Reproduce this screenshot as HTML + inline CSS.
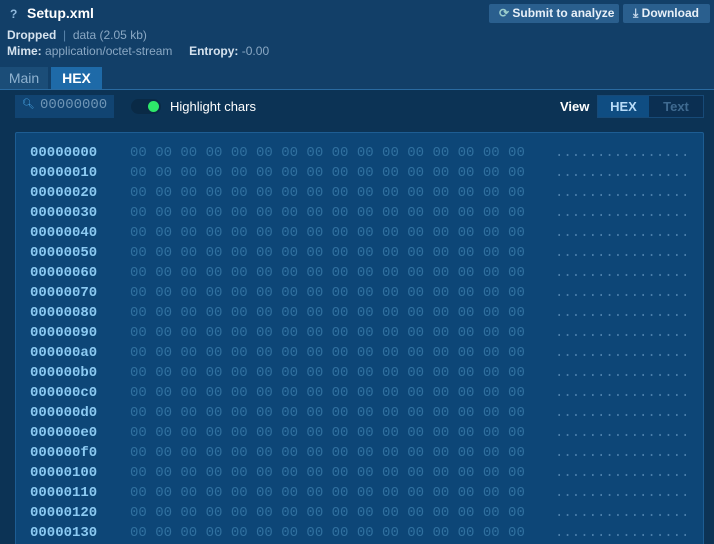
<!DOCTYPE html><html><head><style>
html,body{margin:0;width:714px;height:544px;overflow:hidden}
body{background:#0c3355;font-family:"Liberation Sans",sans-serif;position:relative}
.hdr{position:absolute;left:0;top:0;width:714px;height:89px;background:#123f68;border-bottom:1px solid #2a6aa0}
.t{position:absolute;white-space:nowrap}
.btn{position:absolute;top:4px;height:19px;background:#2a5f8e;border-radius:2px;color:#e8f0f8;font-weight:bold;font-size:12px;line-height:19px}
.panel{position:absolute;left:15px;top:132px;width:687px;height:430px;background:#0d4677;border:1px solid #1d5d93;border-radius:2px}
.m{font-family:"Liberation Mono",monospace;font-size:14px;position:absolute;white-space:pre}
.wrap{position:absolute;left:0;top:0;width:714px;height:544px;overflow:hidden}
</style></head><body><div class="wrap">
<div class="hdr"></div>
<div class="t" style="left:10px;top:7px;color:#8fb8dc;font-size:12px;font-weight:bold">?</div>
<div class="t" style="left:27px;top:5px;color:#fff;font-size:14px;font-weight:bold">Setup.xml</div>
<div class="t" style="left:7px;top:28px;font-size:12px;color:#d5e2ee;font-weight:bold">Dropped <span style="color:#5a86ad;font-weight:normal">&nbsp;|&nbsp;</span> <span style="color:#8aa8c4;font-weight:normal">data (2.05 kb)</span></div>
<div class="t" style="left:7px;top:44px;font-size:12px;color:#d5e2ee;font-weight:bold">Mime: <span style="color:#8aa8c4;font-weight:normal">application/octet-stream</span>&nbsp;&nbsp;&nbsp;&nbsp; Entropy: <span style="color:#8aa8c4;font-weight:normal">-0.00</span></div>
<div class="btn" style="left:489px;width:130px"><span style="padding-left:10px;color:#9cc">⟳</span> Submit to analyze</div>
<div class="btn" style="left:623px;width:87px"><span style="padding-left:10px;color:#cde">⤓</span> Download</div>
<div class="t" style="left:0;top:67px;width:48px;height:22px;background:#1b4d78;color:#8fb2d0;font-size:14px;line-height:22px;text-align:center">Main</div>
<div class="t" style="left:51px;top:67px;width:51px;height:22px;background:#1e6aa8;color:#fff;font-weight:bold;font-size:14px;line-height:22px;text-align:center">HEX</div>
<div class="t" style="left:15px;top:95px;width:99px;height:23px;background:#114472"></div>
<div class="t" style="left:22px;top:99px;color:#4aa8e8;font-size:10px">🔍︎</div>
<div class="m" style="left:40px;top:97px;color:#6f95b5">00000000</div>
<div class="t" style="left:131px;top:99px;width:30px;height:15px;border-radius:8px;background:#0a2a46"></div>
<div class="t" style="left:148px;top:101px;width:11px;height:11px;border-radius:6px;background:#2ee86a"></div>
<div class="t" style="left:170px;top:99px;color:#fff;font-size:13px">Highlight chars</div>
<div class="t" style="left:560px;top:99px;color:#fff;font-size:13px;font-weight:bold">View</div>
<div class="t" style="left:597px;top:95px;width:105px;height:21px;border:1px solid #174a78;background:#0b2f52"></div>
<div class="t" style="left:598px;top:96px;width:51px;height:21px;background:#0f4d82;color:#b8dcf8;font-weight:bold;font-size:13px;line-height:21px;text-align:center">HEX</div>
<div class="t" style="left:650px;top:96px;width:52px;height:21px;color:#3f6a90;font-weight:bold;font-size:13px;line-height:21px;text-align:center">Text</div>
<div class="panel"></div>
<div id="rows"></div>
</div>
<script>
var h='';var b='00 00 00 00 00 00 00 00 00 00 00 00 00 00 00 00';
for(var i=0;i<20;i++){var y=145+i*20;var o=(i*16).toString(16);while(o.length<8)o='0'+o;
h+='<div class="m" style="left:30px;top:'+y+'px;color:#8ccaf2;font-weight:bold">'+o+'</div>';
h+='<div class="m" style="left:130px;top:'+y+'px;color:#30709f">'+b+'</div>';
h+='<div class="m" style="left:555px;top:'+y+'px;color:#4a7eaa">................</div>';}
document.getElementById('rows').innerHTML=h;
</script>
</body></html>
